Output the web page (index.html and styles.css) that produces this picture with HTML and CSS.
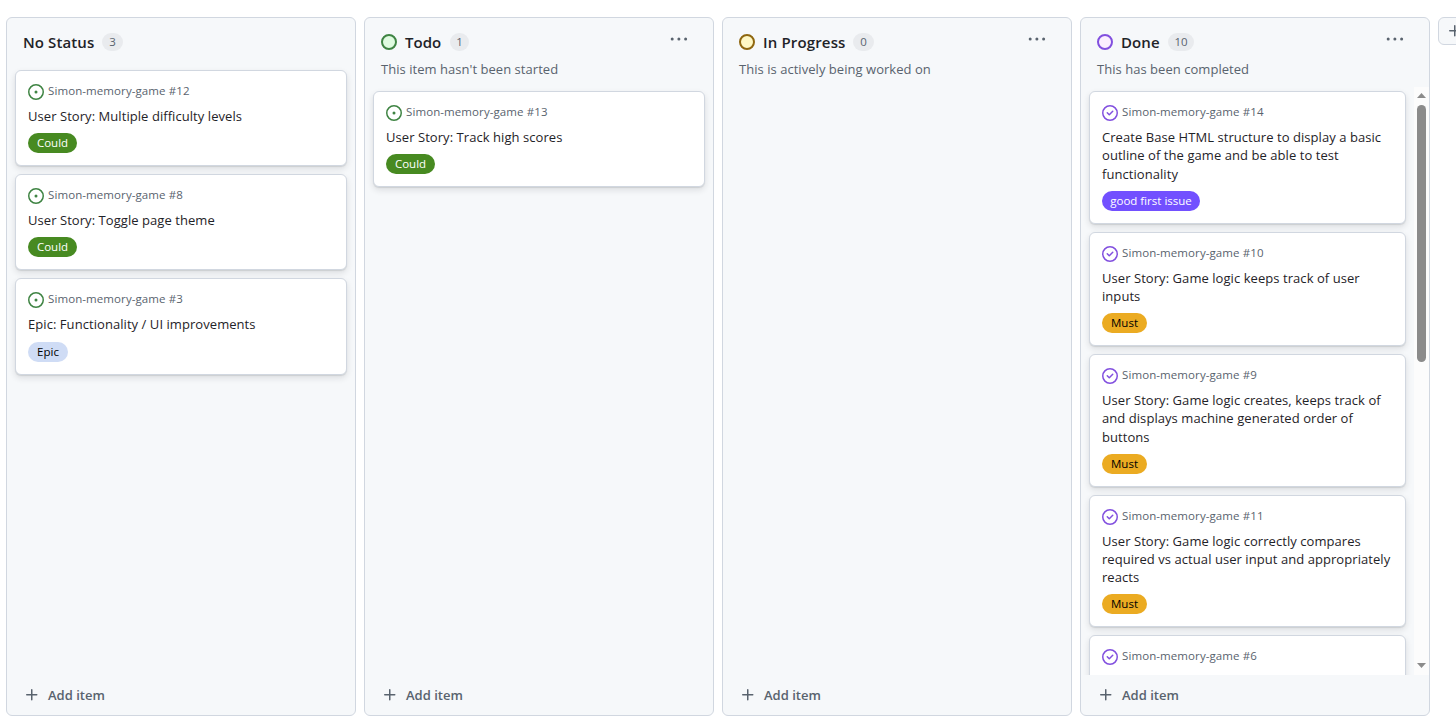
FILE: index.html
```
<!DOCTYPE html>
<html lang="en">
<head>
<meta charset="utf-8">
<title>Project board</title>
<link rel="stylesheet" href="styles.css">
</head>
<body>
<svg class="defs" width="0" height="0" aria-hidden="true">
  <symbol id="open" viewBox="0 0 16 16"><path d="M8 9.5a1.5 1.5 0 1 0 0-3 1.5 1.5 0 0 0 0 3Z"/><path d="M8 0a8 8 0 1 1 0 16A8 8 0 0 1 8 0ZM1.5 8a6.5 6.5 0 1 0 13 0 6.5 6.5 0 0 0-13 0Z"/></symbol>
  <symbol id="closed" viewBox="0 0 16 16"><path d="M11.28 6.78a.75.75 0 0 0-1.06-1.06L7.25 8.69 5.78 7.22a.75.75 0 0 0-1.06 1.06l2 2a.75.75 0 0 0 1.06 0l3.5-3.5Z"/><path d="M16 8A8 8 0 1 1 0 8a8 8 0 0 1 16 0Zm-1.5 0a6.5 6.5 0 1 0-13 0 6.5 6.5 0 0 0 13 0Z"/></symbol>
  <symbol id="plus" viewBox="0 0 16 16"><path d="M7.75 2a.75.75 0 0 1 .75.75V7h4.25a.75.75 0 0 1 0 1.5H8.5v4.25a.75.75 0 0 1-1.5 0V8.5H2.75a.75.75 0 0 1 0-1.5H7V2.75A.75.75 0 0 1 7.75 2Z"/></symbol>
  <symbol id="dots" viewBox="0 0 18 4"><circle cx="2.2" cy="2" r="1.5"/><circle cx="8.9" cy="2" r="1.5"/><circle cx="15.6" cy="2" r="1.5"/></symbol>
</svg>
<main class="board">
  <section class="column">
    <header class="head head-short">
      <div class="head-row"><h2 class="name n-none">No Status</h2><span class="count c1">3</span></div>
    </header>
    <div class="body"><div class="cards">
      <article class="card"><div class="ref"><svg class="icon green"><use href="#open"/></svg><span>Simon-memory-game #12</span></div><h3 class="title">User Story: Multiple difficulty levels</h3><span class="label could">Could</span></article>
      <article class="card"><div class="ref"><svg class="icon green"><use href="#open"/></svg><span>Simon-memory-game #8</span></div><h3 class="title">User Story: Toggle page theme</h3><span class="label could">Could</span></article>
      <article class="card"><div class="ref"><svg class="icon green"><use href="#open"/></svg><span>Simon-memory-game #3</span></div><h3 class="title">Epic: Functionality / UI improvements</h3><span class="label epic">Epic</span></article>
    </div></div>
    <footer class="add"><svg class="icon"><use href="#plus"/></svg><span>Add item</span></footer>
  </section>

  <section class="column">
    <header class="head">
      <div class="head-row"><i class="dot dot-green"></i><h2 class="name n-todo">Todo</h2><span class="count c1b">1</span><svg class="dots"><use href="#dots"/></svg></div>
      <p class="desc">This item hasn't been started</p>
    </header>
    <div class="body"><div class="cards">
      <article class="card"><div class="ref"><svg class="icon green"><use href="#open"/></svg><span>Simon-memory-game #13</span></div><h3 class="title">User Story: Track high scores</h3><span class="label could">Could</span></article>
    </div></div>
    <footer class="add"><svg class="icon"><use href="#plus"/></svg><span>Add item</span></footer>
  </section>

  <section class="column">
    <header class="head">
      <div class="head-row"><i class="dot dot-yellow"></i><h2 class="name n-prog">In Progress</h2><span class="count c1">0</span><svg class="dots"><use href="#dots"/></svg></div>
      <p class="desc">This is actively being worked on</p>
    </header>
    <div class="body"><div class="cards"></div></div>
    <footer class="add"><svg class="icon"><use href="#plus"/></svg><span>Add item</span></footer>
  </section>

  <section class="column">
    <header class="head">
      <div class="head-row"><i class="dot dot-purple"></i><h2 class="name n-done">Done</h2><span class="count c2">10</span><svg class="dots"><use href="#dots"/></svg></div>
      <p class="desc">This has been completed</p>
    </header>
    <div class="body"><div class="cards">
      <article class="card"><div class="ref"><svg class="icon purple"><use href="#closed"/></svg><span>Simon-memory-game #14</span></div><h3 class="title">Create Base HTML structure to display a basic<br>outline of the game and be able to test<br>functionality</h3><span class="label first">good first issue</span></article>
      <article class="card"><div class="ref"><svg class="icon purple"><use href="#closed"/></svg><span>Simon-memory-game #10</span></div><h3 class="title">User Story: Game logic keeps track of user<br>inputs</h3><span class="label must">Must</span></article>
      <article class="card"><div class="ref"><svg class="icon purple"><use href="#closed"/></svg><span>Simon-memory-game #9</span></div><h3 class="title">User Story: Game logic creates, keeps track of<br>and displays machine generated order of<br>buttons</h3><span class="label must">Must</span></article>
      <article class="card"><div class="ref"><svg class="icon purple"><use href="#closed"/></svg><span>Simon-memory-game #11</span></div><h3 class="title">User Story: Game logic correctly compares<br>required vs actual user input and appropriately<br>reacts</h3><span class="label must">Must</span></article>
      <article class="card card-cut"><div class="ref"><svg class="icon purple"><use href="#closed"/></svg><span>Simon-memory-game #6</span></div></article>
    </div>
    <div class="scrollbar"><svg class="arrow" viewBox="0 0 9 5"><path d="M4.5 0 9 5H0Z"/></svg><div class="track"><div class="thumb"></div></div><svg class="arrow" viewBox="0 0 9 5"><path d="M0 0H9L4.5 5Z"/></svg></div>
    </div>
    <footer class="add"><svg class="icon"><use href="#plus"/></svg><span>Add item</span></footer>
  </section>

  <button class="new-column" aria-label="Add column"><svg class="icon"><use href="#plus"/></svg></button>
</main>
</body>
</html>
```
FILE: styles.css
```
* { box-sizing: border-box; }
body { margin: 0; background: #fff; color: #1f2328; font-family: "Open Sans", "Noto Sans", sans-serif; overflow: hidden; }
h2, h3, p { margin: 0; }
.defs { display: none; }
.icon { width: 16px; height: 16px; flex: none; fill: currentColor; }
.green { color: #3f8443; }
.purple { color: #8250df; }

.board { display: flex; gap: 8px; align-items: flex-start; width: 1456px; height: 724px; padding: 17px 0 8px 6px; overflow: hidden; white-space: nowrap; }
.column { flex: none; display: flex; flex-direction: column; width: 350px; height: 699px; background: #f6f8fa; border: 1px solid #d1d7e0; border-radius: 6px; overflow: hidden; }

.head { flex: none; height: 69.1px; padding: 14px 16px 0; }
.head-short { height: 48px; }
.head-row { display: flex; align-items: center; height: 20px; }
.dot { flex: none; width: 16px; height: 16px; margin-right: 8px; border: 2px solid; border-radius: 50%; }
.dot-green { border-color: #3f8443; background: #dffbe0; }
.dot-yellow { border-color: #8f6710; background: #fff8c5; }
.dot-purple { border-color: #8250df; background: #fbefff; }
.name { font-size: 15px; font-weight: 600; line-height: 20px; }
.n-none { width: 79px; letter-spacing: 0.1px; }
.n-todo { width: 45px; }
.n-prog { width: 90px; letter-spacing: 0.15px; }
.n-done { width: 47px; letter-spacing: 0.1px; }
.count { height: 18px; border-radius: 9px; background: #e9ebee; color: #59636e; font-size: 11.5px; line-height: 18px; text-align: center; }
.c1 { width: 21px; }
.c1b { width: 19px; }
.c2 { width: 26px; }
.dots { width: 18px; height: 4px; margin: -6px 9px 0 auto; fill: #59636e; }
.desc { padding-top: 7px; color: #59636e; font-size: 13px; line-height: 20px; letter-spacing: 0.04px; }

.body { flex: 1; display: flex; min-height: 0; overflow: hidden; }
.cards { flex: 1; display: flex; flex-direction: column; gap: 8px; padding: 4px 8px 0; }
.card { flex: none; padding: 12px; background: #fff; border: 1px solid #d1d7e0; border-radius: 6px; box-shadow: 0 1px 1px rgba(31, 35, 40, .1), 0 3px 6px rgba(31, 35, 40, .12); }
.card-cut { height: 96px; }
.ref { display: flex; align-items: center; gap: 4px; height: 18px; margin-bottom: 6px; color: #59636e; font-size: 11.5px; line-height: 16px; letter-spacing: 0.09px; }
.ref span { margin-top: -2px; }
.title { margin-bottom: 8px; font-size: 13px; font-weight: 400; line-height: 18.2px; letter-spacing: 0.06px; }
.label { display: block; width: max-content; height: 20px; border-radius: 10px; color: #fff; font-size: 11.5px; line-height: 20px; text-align: center; }
.could { width: 49px; background: #478a21; }
.epic { width: 40px; background: #cfdcf5; color: #000; }
.first { width: 98px; background: #7250ff; }
.must { width: 45px; background: #ebab22; color: #000; }

.scrollbar { flex: none; display: flex; flex-direction: column; align-items: center; width: 15px; padding: 6px 0 7px; background: #fcfcfc; }
.arrow { width: 9px; height: 5px; fill: #8b8b8b; }
.track { flex: 1; padding-top: 7px; }
.thumb { width: 9px; height: 257px; border-radius: 5px; background: #8b8b8b; }

.add { flex: none; display: flex; align-items: center; gap: 8px; height: 40px; padding: 0 17px; color: #59636e; font-size: 13px; font-weight: 600; }
.new-column { flex: none; display: flex; align-items: center; width: 36px; height: 28px; padding: 0 8px; background: #f6f8fa; border: 1px solid #d1d7e0; border-radius: 6px; color: #59636e; }
```
